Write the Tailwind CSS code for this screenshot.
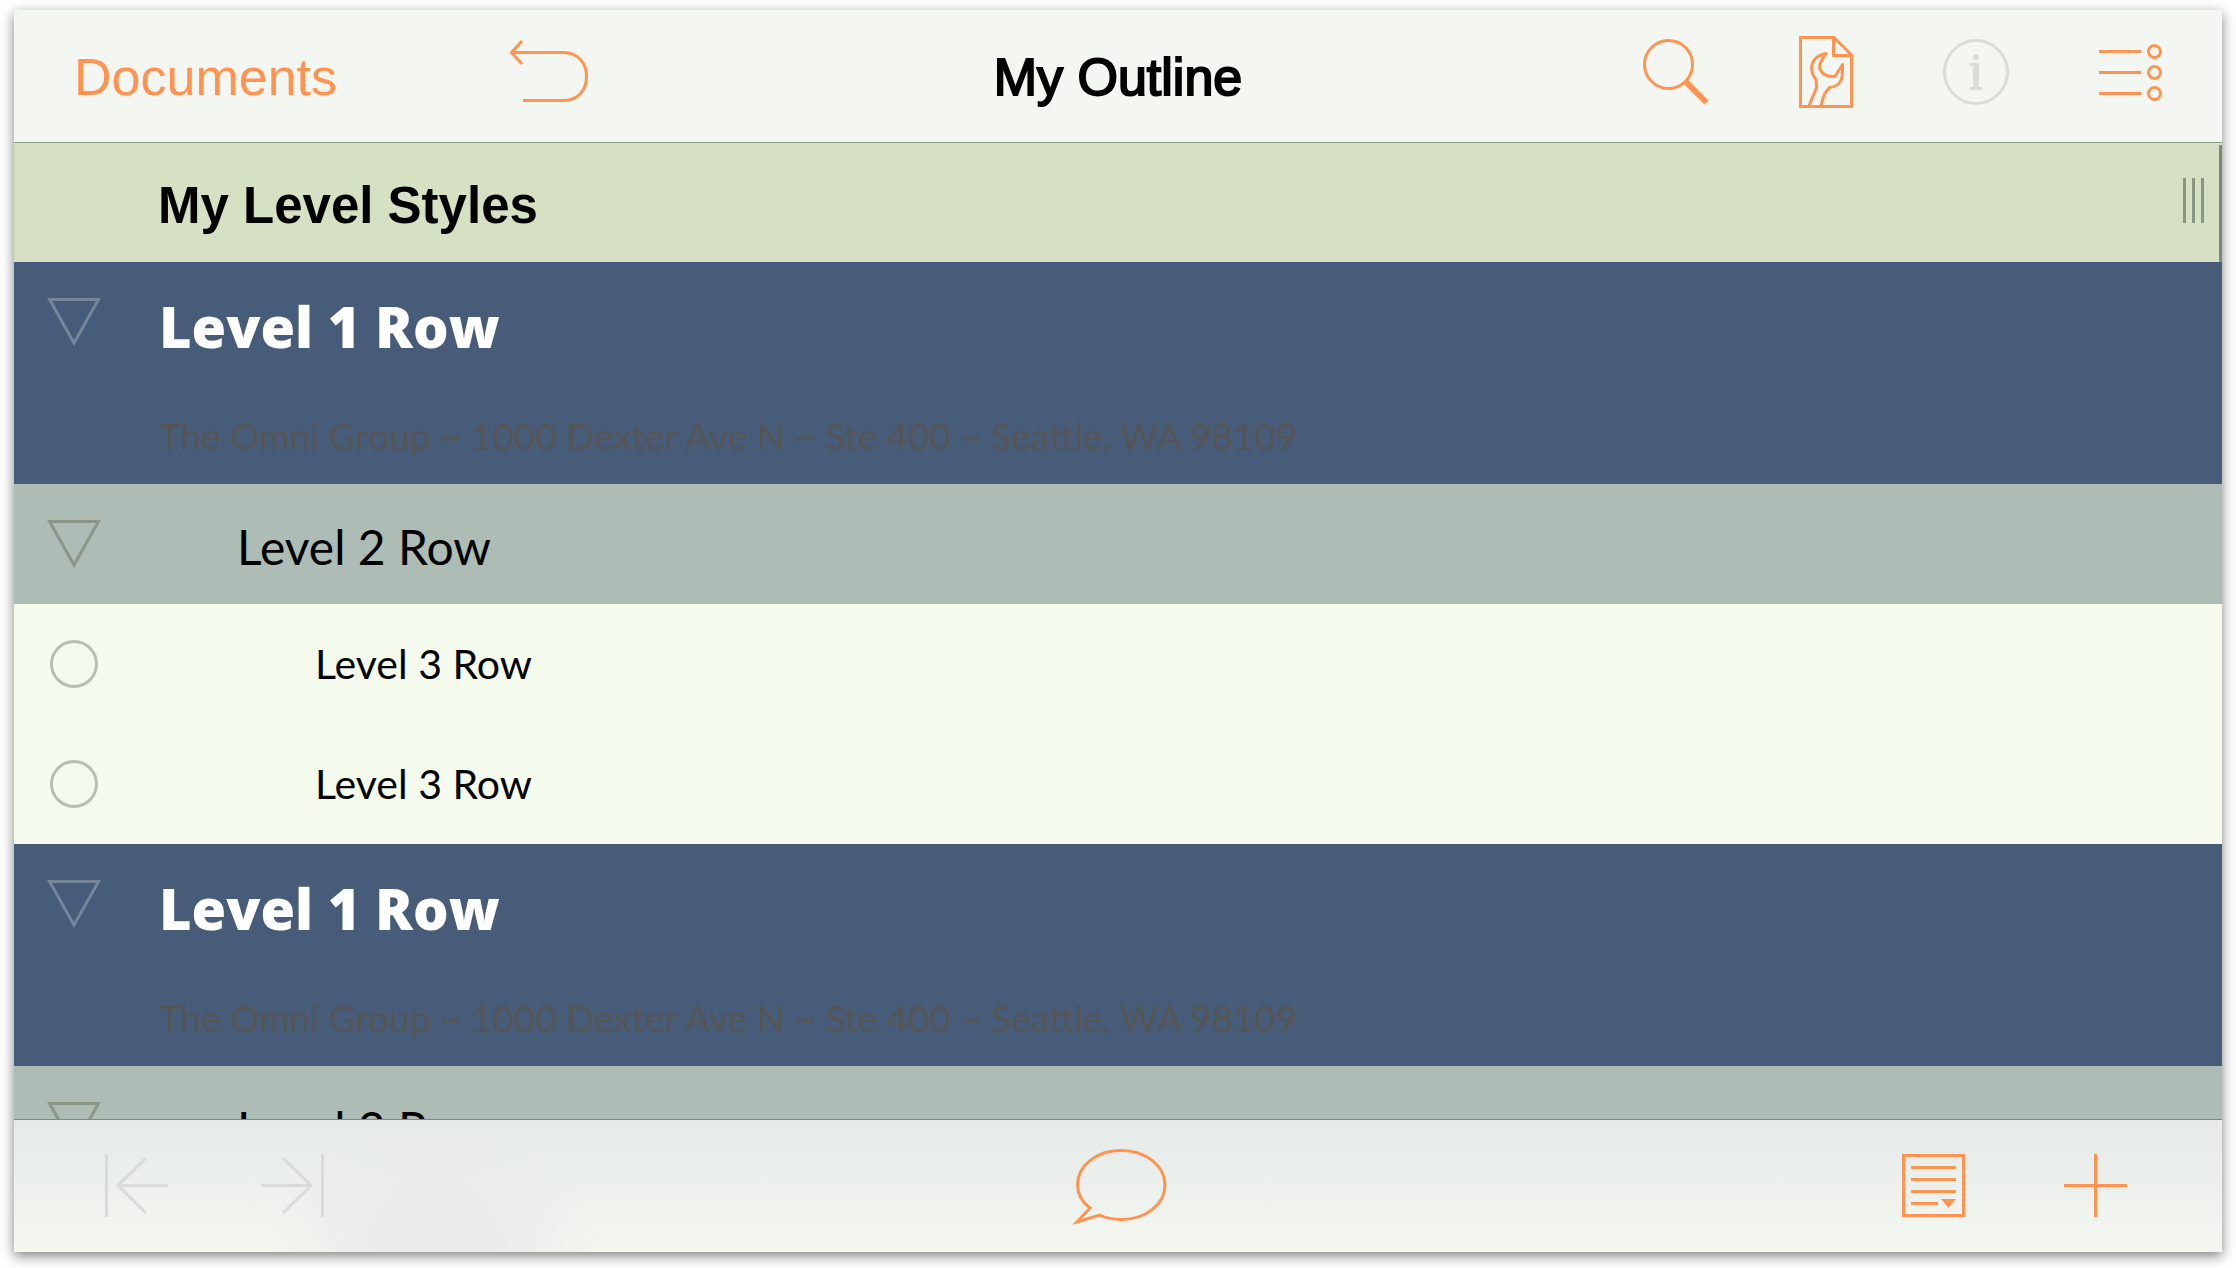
<!DOCTYPE html>
<html lang="en">
<head>
  <meta charset="UTF-8" />
  <meta name="viewport" content="width=device-width, initial-scale=1.0"/>
  <title>My Outline</title>
  <script src="https://cdn.jsdelivr.net/npm/@tailwindcss/browser@4"></script>
</head>
<body class="bg-white font-['Liberation_Sans',Arial,sans-serif] text-black">

  <div class="h-screen px-[14px] pt-[10px] pb-[16px]">
    <div class="relative flex h-full flex-col bg-[#f4f7f1] shadow-[0_4px_12px_rgba(0,0,0,0.5)]">

      <!-- Top bar -->
      <header class="grid h-[133px] shrink-0 grid-cols-[1fr_auto_1fr] items-center border-b border-[#8f9b8a] bg-[#f4f7f1] px-[60px] pb-[8px]">
        <div class="flex items-center gap-[172px]">
          <a href="#documents" class="pt-[10px] text-[52px] leading-[60px] text-[#ff934f]">Documents</a>
          <button type="button" aria-label="Undo" class="text-[#ff934f]">
            <svg class="block h-[66px] w-[80px]" viewBox="0 0 80 66" fill="none" stroke="currentColor" stroke-width="3">
              <path d="M13 2 L2.500 13.500 L13 25 M2.500 13.500 H54 C70 13.500 77.500 25 77.500 37.500 C77.500 50 70 61.500 54 61.500 H14" />
            </svg>
          </button>
        </div>
        <h1 class="pt-[10px] text-[52px] leading-[60px] [-webkit-text-stroke:2px_black]">My Outline</h1>
        <div class="flex items-center justify-end">
          <button type="button" aria-label="Search" class="mr-[90px] text-[#ff934f]">
            <svg class="block h-[66px] w-[66px]" viewBox="0 0 66 66" fill="none" stroke="currentColor">
              <circle cx="25.500" cy="25.500" r="24" stroke-width="3" />
              <path d="M42 42 L63.500 63.500" stroke-width="6" />
            </svg>
          </button>
          <button type="button" aria-label="Document settings" class="mr-[90px] text-[#ff934f]">
            <svg class="block h-[72px] w-[54px]" viewBox="0 0 54 72" fill="none" stroke="currentColor" stroke-width="3">
              <path d="M1.500 1.500 H35 L52.500 19 V70.500 H1.500 Z" />
              <path d="M34.500 1.500 V19.500 H52.500" />
              <path d="M10 70 L17.500 51.500 C17.500 43 16.500 43 14 39 C10 28 15 20 27 17.500 C23 23 20 28 20.500 32 C23 39 29 41 36 40.500 L43.500 28.500 C44 42 43 50 30.500 51.500 C25 58 24.500 59 22 70" stroke-linejoin="round" />
            </svg>
          </button>
          <button type="button" aria-label="Info" disabled class="mr-[90px] text-[#d9dcd7]">
            <svg class="block h-[66px] w-[66px]" viewBox="0 0 66 66" fill="currentColor">
              <circle cx="33" cy="33" r="31.500" fill="none" stroke="currentColor" stroke-width="3" />
              <circle cx="33" cy="18" r="3" />
              <path d="M27 24 H36 V48 H39 V51 H27 V48 H30 V27 H27 Z" />
            </svg>
          </button>
          <button type="button" aria-label="Contents" class="text-[#ff934f]">
            <svg class="block h-[57px] w-[63px]" viewBox="0 0 63 57" fill="none" stroke="currentColor" stroke-width="3">
              <path d="M0 7.500 H42 M0 28.500 H42 M0 49.500 H42" />
              <circle cx="55.500" cy="7.500" r="6" />
              <circle cx="55.500" cy="28.500" r="6" />
              <circle cx="55.500" cy="49.500" r="6" />
            </svg>
          </button>
        </div>
      </header>

      <!-- Outline rows -->
      <main class="relative min-h-0 flex-1 overflow-hidden bg-[#f5fbec]">
        <div class="flex h-[119px] items-center justify-between bg-[#d6e0c2] pr-[18px] pb-[4px] pl-[144px]">
          <h2 class="pt-[10px] text-[51px] leading-[60px] font-bold">My Level Styles</h2>
          <button type="button" aria-label="Resize column" class="flex gap-[6px]">
            <span class="h-[45px] w-[3px] bg-[#8b9586]"></span>
            <span class="h-[45px] w-[3px] bg-[#8b9586]"></span>
            <span class="h-[45px] w-[3px] bg-[#8b9586]"></span>
          </button>
        </div>

        <ul class="font-['Gill_Sans',Lato,sans-serif]">
          <li class="flex h-[222px] items-start bg-[#465c79] pt-[36px]">
            <button type="button" aria-label="Collapse row" class="ml-[33px] text-[#76879c]">
              <svg class="block h-[48px] w-[54px]" viewBox="0 0 54 48" fill="none" stroke="currentColor" stroke-width="3">
                <path d="M2.500 1.500 H51.500 L27 45 Z" />
              </svg>
            </button>
            <div class="ml-[58px]">
              <p class="font-['Gill_Sans','Open_Sans',sans-serif] text-[56px] leading-[56px] font-extrabold text-white">Level 1 Row</p>
              <p class="mt-[58px] text-[37px] leading-[48px] text-[#555555]">The Omni Group ~ 1000 Dexter Ave N ~ Ste 400 ~ Seattle, WA 98109</p>
            </div>
          </li>
          <li class="flex h-[120px] items-start bg-[#adbcb5] pt-[36px]">
            <button type="button" aria-label="Collapse row" class="ml-[33px] text-[#8b9588]">
              <svg class="block h-[48px] w-[54px]" viewBox="0 0 54 48" fill="none" stroke="currentColor" stroke-width="3">
                <path d="M2.500 1.500 H51.500 L27 45 Z" />
              </svg>
            </button>
            <p class="ml-[136px] text-[48px] leading-[54px]">Level 2 Row</p>
          </li>
          <li class="flex h-[120px] items-start bg-[#f5fbec] pt-[36px]">
            <button type="button" aria-label="Mark row done" class="ml-[36px] h-[48px] w-[48px] rounded-full border-3 border-[#b8bfb1]"></button>
            <p class="ml-[217px] text-[41px] leading-[48px]">Level 3 Row</p>
          </li>
          <li class="flex h-[120px] items-start bg-[#f5fbec] pt-[36px]">
            <button type="button" aria-label="Mark row done" class="ml-[36px] h-[48px] w-[48px] rounded-full border-3 border-[#b8bfb1]"></button>
            <p class="ml-[217px] text-[41px] leading-[48px]">Level 3 Row</p>
          </li>
          <li class="flex h-[222px] items-start bg-[#465c79] pt-[36px]">
            <button type="button" aria-label="Collapse row" class="ml-[33px] text-[#76879c]">
              <svg class="block h-[48px] w-[54px]" viewBox="0 0 54 48" fill="none" stroke="currentColor" stroke-width="3">
                <path d="M2.500 1.500 H51.500 L27 45 Z" />
              </svg>
            </button>
            <div class="ml-[58px]">
              <p class="font-['Gill_Sans','Open_Sans',sans-serif] text-[56px] leading-[56px] font-extrabold text-white">Level 1 Row</p>
              <p class="mt-[58px] text-[37px] leading-[48px] text-[#555555]">The Omni Group ~ 1000 Dexter Ave N ~ Ste 400 ~ Seattle, WA 98109</p>
            </div>
          </li>
          <li class="flex h-[120px] items-start bg-[#adbcb5] pt-[36px]">
            <button type="button" aria-label="Collapse row" class="ml-[33px] text-[#8b9588]">
              <svg class="block h-[48px] w-[54px]" viewBox="0 0 54 48" fill="none" stroke="currentColor" stroke-width="3">
                <path d="M2.500 1.500 H51.500 L27 45 Z" />
              </svg>
            </button>
            <p class="ml-[136px] text-[48px] leading-[54px]">Level 2 Row</p>
          </li>
        </ul>

        <!-- Scroll indicator -->
        <div class="absolute top-[2px] right-0 h-[117px] w-[3px] bg-[#7c887e]"></div>
      </main>

      <!-- Bottom bar -->
      <footer class="grid h-[133px] shrink-0 grid-cols-[1fr_auto_1fr] items-center border-t border-[#7d8982] bg-[radial-gradient(ellipse_170px_130px_at_420px_100%,#e8ebe8_30%,#e8ebe800_100%),linear-gradient(to_bottom,#e5eae9,#f4f7f0)] pr-[95px] pb-[2px] pl-[91px]">
        <div class="flex items-center gap-[93px] text-[#d9dbd8]">
          <button type="button" aria-label="Outdent" disabled>
            <svg class="block h-[63px] w-[63px]" viewBox="0 0 63 63" fill="none" stroke="currentColor" stroke-width="3">
              <path d="M1.500 0 V63 M63 31.500 H13 M41 4 L13 31.500 L41 59" />
            </svg>
          </button>
          <button type="button" aria-label="Indent" disabled>
            <svg class="block h-[63px] w-[63px]" viewBox="0 0 63 63" fill="none" stroke="currentColor" stroke-width="3">
              <path d="M61.500 0 V63 M0 31.500 H50 M22 4 L50 31.500 L22 59" />
            </svg>
          </button>
        </div>
        <button type="button" aria-label="Add note" class="pt-[4px] pl-[8px] text-[#ff934f]">
          <svg class="block h-[76px] w-[94px]" viewBox="0 0 94 76" fill="none" stroke="currentColor" stroke-width="3">
            <path d="M26.500 66 C33 69 41 70.500 48 70.500 C73 70.500 92 55 92 36 C92 17 73 1.500 48 1.500 C23 1.500 4.500 17 4.500 36 C4.500 45 9 53 17 59 L4 73 Z" />
          </svg>
        </button>
        <div class="flex items-center justify-end gap-[99px] text-[#ff934f]">
          <button type="button" aria-label="Row actions">
            <svg class="block h-[63px] w-[63px]" viewBox="0 0 63 63" fill="none" stroke="currentColor" stroke-width="3">
              <rect x="1.500" y="1.500" width="60" height="60" />
              <path d="M9 13.500 H54 M9 25.500 H54 M9 37.500 H54 M9 49.500 H36" />
              <path d="M39 45 H54 L46.500 54 Z" fill="currentColor" stroke="none" />
            </svg>
          </button>
          <button type="button" aria-label="Add row">
            <svg class="block h-[63px] w-[63px]" viewBox="0 0 63 63" fill="none" stroke="currentColor" stroke-width="3">
              <path d="M31.500 0 V63 M0 31.500 H63" />
            </svg>
          </button>
        </div>
      </footer>

    </div>
  </div>

</body>
</html>
